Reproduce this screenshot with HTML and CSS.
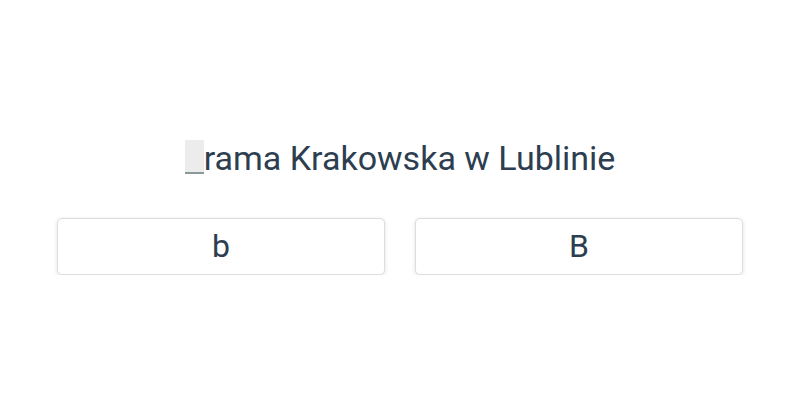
FILE: index.html
```html
<!DOCTYPE html>
<html lang="pl">
<head>
    <meta charset="UTF-8">
    <meta name="viewport" content="width=device-width, initial-scale=1.0">
    <title>Quiz</title>
    <link rel="stylesheet" href="styles.css">
</head>
<body>
    <div class="quiz">
        <h1 class="question"><span class="gap"></span>rama Krakowska w Lublinie</h1>
        <div class="answers">
            <button class="answer">b</button>
            <button class="answer">B</button>
        </div>
    </div>
</body>
</html>
```

FILE: styles.css
```css
body {
    font-family: Roboto, "Noto Sans", sans-serif;
    background-color: #fff;
    margin: 0;
    color: #2c3e50;
}
.quiz {
    padding: 137px 57px 0;
}
.question {
    margin: 0;
    font-size: 34px;
    font-weight: 400;
    text-align: center;
    line-height: 42px;
}
.gap {
    display: inline-block;
    width: 19px;
    height: 32px;
    background-color: #ececec;
    border-bottom: 2px solid #8a9a9a;
    vertical-align: -4px;
}
.answers {
    display: grid;
    grid-template-columns: 1fr 1fr;
    gap: 30px;
    margin-top: 39px;
}
.answer {
    font-family: Roboto, "Noto Sans", sans-serif;
    font-size: 32px;
    color: #2c3e50;
    background-color: #fff;
    border: 1px solid #ddd;
    border-radius: 5px;
    box-shadow: 0 1px 4px rgba(0, 0, 0, 0.12);
    height: 57px;
    padding: 0 0 2px;
    cursor: pointer;
}
```
